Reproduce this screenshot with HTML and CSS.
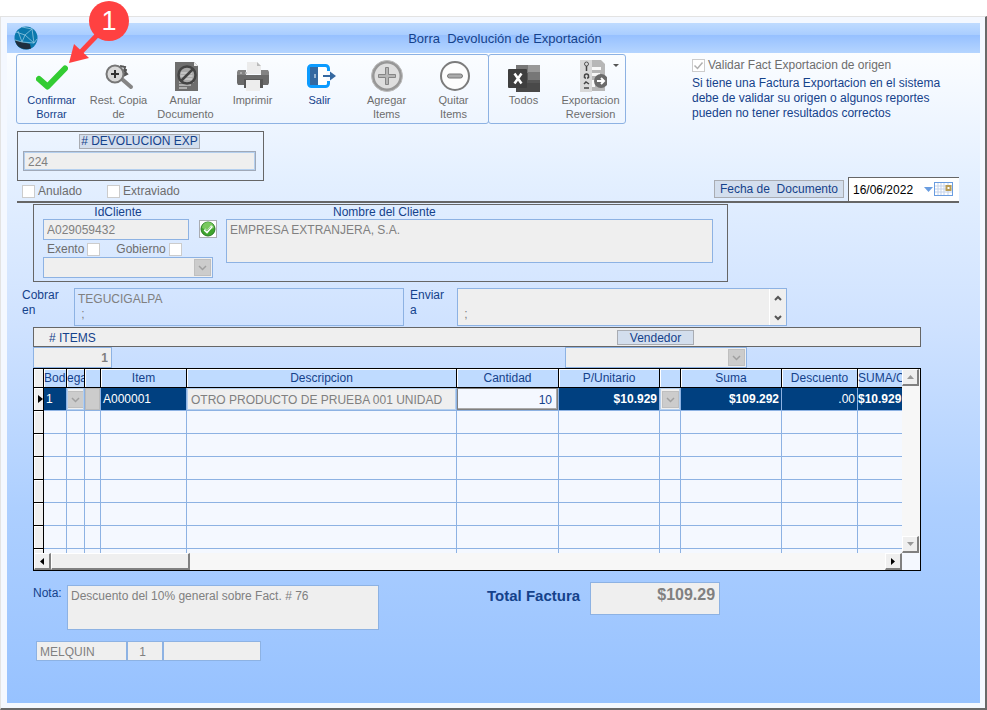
FILE: index.html
```html
<!DOCTYPE html>
<html lang="es">
<head>
  <meta charset="UTF-8">
  <meta name="viewport" content="width=device-width, initial-scale=1.0">
  <title>Borra Devolución de Exportación</title>
  <link rel="stylesheet" href="styles.css">
</head>
<body>
  <div class="window">
    <header class="titlebar">
      <svg class="logo" viewBox="0 0 24 24" width="24" height="24" aria-hidden="true">
        <circle cx="12" cy="12" r="11.5" fill="#0b78ad"/>
        <path d="M1 14l7 2 8 2 1 4.500C9 25 2 21 1 14z" fill="#1f2f3f"/>
        <path d="M2 6l9 3 7-6M11 9l-3 7-7-2M11 9l9 8M18 3l2 14 3-4M8 16l12 1M8 16L4 5M18 3L8 1" fill="none" stroke="#8fc6e0" stroke-width=".8"/>
      </svg>
      <h1>Borra&nbsp; Devolución de Exportación</h1>
    </header>

    <form class="form">
      <div class="top">
        <div class="ribbon">
          <div class="ribbon-group">
            <button type="button" class="tool active">
              <svg viewBox="0 0 32 32" width="32" height="32"><path d="M3 19l8.500 7.500L29 8.500" fill="none" stroke="#33cc33" stroke-width="6" stroke-linecap="round" stroke-linejoin="round"/></svg>
              Confirmar Borrar
            </button>
            <button type="button" class="tool">
              <svg viewBox="0 0 32 32" width="32" height="32"><path d="M17 6l5 1-1 4 3 3-4 2M20 6l3 4-2 6" fill="none" stroke="#555" stroke-width="2"/><path d="M20 20l8 7" stroke="#858585" stroke-width="4" stroke-linecap="round"/><circle cx="12" cy="14" r="8.500" fill="#d9d9d9" stroke="#777" stroke-width="2"/><path d="M12 10v8M8 14h8" stroke="#333" stroke-width="2"/></svg>
              Rest. Copia de
            </button>
            <button type="button" class="tool">
              <svg viewBox="0 0 32 32" width="32" height="32"><path d="M5 2h19l4 4v25H5z" fill="#6e6e6e"/><path d="M24 2l4 4h-4z" fill="#eee"/><path d="M9 16h15M9 19h15M9 22h15M9 25h12M9 28h8" stroke="#eee"/><circle cx="17" cy="15" r="8.500" fill="#a9a9a9" stroke="#444" stroke-width="2.500"/><path d="M10.500 16h12M11 13h11M12 19h10" stroke="#ddd"/><path d="M11 21L23 9" stroke="#444" stroke-width="2.500"/></svg>
              Anular Documento
            </button>
            <button type="button" class="tool">
              <svg viewBox="0 0 32 32" width="32" height="32"><path d="M10 2h10l4 4v8H10z" fill="#ececec"/><path d="M20 2v4h4z" fill="#bbb"/><path d="M1 10h8v5h15v-5h7l1 2v10H0V12z" fill="#838383"/><path d="M0 15h32v8l-1 2H1l-1-2z" fill="#6a6a6a"/><path d="M7 19h19v9H7z" fill="#585858"/><path d="M9 20h14v11H9z" fill="#ededed"/><circle cx="4" cy="13" r="1" fill="#bbb"/><circle cx="9" cy="13" r="1" fill="#bbb"/></svg>
              Imprimir
            </button>
            <button type="button" class="tool active">
              <svg viewBox="0 0 32 32" width="32" height="32"><rect x="4.500" y="5.500" width="20" height="21" rx="3" fill="#fff" stroke="#0c9bff" stroke-width="3"/><path d="M6 7h8v18H6z" fill="#3568a0"/><path d="M11 14v4" stroke="#fff"/><path d="M22 11h5v10h-5z" fill="#f9fbff"/><path d="M19 16h10" stroke="#3568a0" stroke-width="2"/><path d="M26 11.500l6 4.500-6 4.500z" fill="#3568a0"/></svg>
              Salir
            </button>
            <button type="button" class="tool">
              <svg viewBox="0 0 32 32" width="32" height="32"><circle cx="16" cy="16" r="14" fill="#dedede" stroke="#979797" stroke-width="3"/><circle cx="16" cy="16" r="15.500" fill="none" stroke="#bdbdbd"/><path d="M14.500 7.500h3v7h7v3h-7v7h-3v-7h-7v-3h7z" fill="#b5b5b5" stroke="#858585"/></svg>
              Agregar<br>Items
            </button>
            <button type="button" class="tool">
              <svg viewBox="0 0 32 32" width="32" height="32"><circle cx="17" cy="16" r="14" fill="#fdfdfd" stroke="#7c7c7c" stroke-width="2"/><rect x="9.500" y="14" width="15" height="4" rx="2" fill="#aaa" stroke="#777"/></svg>
              Quitar<br>Items
            </button>
          </div>
          <div class="ribbon-group">
            <button type="button" class="tool">
              <svg viewBox="0 0 32 32" width="32" height="32"><g transform="translate(0 2)"><path d="M8 3h12v8H8z" fill="#777"/><path d="M20 3h12v7H20z" fill="#999"/><path d="M20 10h12v8H20z" fill="#777"/><path d="M8 11h12v10H8z" fill="#555"/><path d="M20 18h12v5H20z" fill="#555"/><path d="M8 21h24v9H8z" fill="#494949"/><rect y="7" width="19" height="19" rx="1" fill="#3f3f3f"/><path d="M6.500 11.500l7 10M13.500 11.500l-7 10" stroke="#fff" stroke-width="2.500"/></g></svg>
              Todos
            </button>
            <button type="button" class="tool menu">
              <svg viewBox="0 0 32 32" width="32" height="32"><path d="M5 0h21l4 4v27H5z" fill="#b7b7b7"/><path d="M5 0h12v32H5z" fill="#d9d9d9"/><path d="M17 7h9v3h-9zM17 13h8v3h-8zM17 20h3v7h-3z" fill="#f8f8f8"/><circle cx="11.500" cy="4" r="2" fill="none" stroke="#555"/><path d="M11.500 6v5M9.500 18v-2a2 2 0 0 1 4 0v2M9.500 18h1.500M12 18h1.500M9 24l2-2 3 2M9 28h5" fill="none" stroke="#444" stroke-width="1.500"/><circle cx="26" cy="21" r="7" fill="#6b6b6b"/><path d="M22 21h7M26 18l3 3-3 3" fill="none" stroke="#fff" stroke-width="2"/></svg>
              Exportacion Reversion
            </button>
          </div>
        </div>
        <div class="validation">
          <label class="check"><input type="checkbox" checked disabled>Validar Fact Exportacion de origen</label>
          <p>Si tiene una Factura Exportacion en el sistema debe de validar su origen o algunos reportes pueden no tener resultados correctos</p>
        </div>
      </div>

      <div class="document">
        <div class="document-id">
          <div class="box">
            <label class="tag" for="devolucion"># DEVOLUCION EXP</label>
            <input type="text" id="devolucion" value="224" disabled>
          </div>
          <div class="flags">
            <label class="check"><input type="checkbox" disabled>Anulado</label>
            <label class="check"><input type="checkbox" disabled>Extraviado</label>
          </div>
        </div>
        <div class="date">
          <label class="tag" for="fecha">Fecha de&nbsp; Documento</label>
          <div class="date-field">
            <input type="text" id="fecha" value="16/06/2022">
            <button type="button" class="calendar" aria-label="Calendario">
              <svg viewBox="0 0 29 16" width="29" height="16"><path d="M0 6h9l-4.500 5z" fill="#6a9de0"/><rect x="10.500" y="1.500" width="18" height="13" fill="#fff" stroke="#6a9de0"/><path d="M11 5h17M11 8h17M11 11h17M14 2v12M17 2v12M20 2v12M24 2v12" stroke="#c5d3ea"/><rect x="22.500" y="5" width="4" height="4" fill="#fff" stroke="#b89b55" stroke-width="2"/></svg>
            </button>
          </div>
        </div>
      </div>

      <div class="client">
        <div class="client-id">
          <label for="idcliente">IdCliente</label>
          <input type="text" id="idcliente" value="A029059432" disabled>
          <div class="client-flags">
            <label class="check">Exento<input type="checkbox" disabled></label>
            <label class="check">Gobierno<input type="checkbox" disabled></label>
          </div>
          <select class="client-type" aria-label="Tipo de cliente" disabled><option></option></select>
        </div>
        <button type="button" class="verify" aria-label="Verificar cliente">
          <svg viewBox="0 0 16 16" width="16" height="16"><circle cx="8" cy="8" r="7" fill="#3fa52d" stroke="#277a24"/><path d="M2 7a6 6 0 0 1 12 0c-4 2-8 2-12 0z" fill="#79c95e"/><path d="M4.500 8.500L7 11l5-6" fill="none" stroke="#fff" stroke-width="2.500"/><path d="M5 8.500l2 1.500 4-4.500" fill="none" stroke="#3fa52d" stroke-width=".7"/></svg>
        </button>
        <div class="client-name">
          <label for="nombre">Nombre del Cliente</label>
          <textarea id="nombre" disabled>EMPRESA EXTRANJERA, S.A.</textarea>
        </div>
      </div>

      <div class="addresses">
        <label for="cobrar">Cobrar en</label>
        <textarea id="cobrar" class="clear" disabled>TEGUCIGALPA
 ;</textarea>
        <label class="send" for="enviar">Enviar a</label>
        <div class="scroll-text">
          <textarea id="enviar" disabled>

 ;</textarea>
          <div class="scroll-arrows">
            <svg viewBox="0 0 8 6" width="8" height="6"><path d="M1 5l3-3 3 3" fill="none" stroke="#555" stroke-width="2"/></svg>
            <svg viewBox="0 0 8 6" width="8" height="6"><path d="M1 1l3 3 3-3" fill="none" stroke="#555" stroke-width="2"/></svg>
          </div>
        </div>
      </div>

      <section class="items">
        <div class="items-bar">
          <label for="numitems"># ITEMS</label>
          <label class="tag" for="vendedor">Vendedor</label>
        </div>
        <div class="items-fields">
          <input type="text" id="numitems" value="1" disabled>
          <select id="vendedor" disabled><option></option></select>
        </div>

        <div class="grid">
          <div class="grid-view">
            <table>
              <colgroup>
                <col class="c-mark"><col class="c-bod"><col class="c-ega"><col class="c-pick"><col class="c-item"><col><col class="c-qty"><col class="c-price"><col class="c-unit"><col class="c-sum"><col class="c-disc"><col class="c-last">
              </colgroup>
              <thead>
                <tr>
                  <th class="mark"></th>
                  <th class="left">Bod</th>
                  <th class="left">ega</th>
                  <th></th>
                  <th>Item</th>
                  <th>Descripcion</th>
                  <th>Cantidad</th>
                  <th>P/Unitario</th>
                  <th></th>
                  <th>Suma</th>
                  <th>Descuento</th>
                  <th class="left">SUMA/C</th>
                </tr>
              </thead>
              <tbody>
                <tr class="selected">
                  <td class="mark"><svg viewBox="0 0 5 8" width="5" height="8"><path d="M0 0l5 4-5 4z"/></svg></td>
                  <td>1</td>
                  <td class="control"><select aria-label="Bodega" disabled><option></option></select></td>
                  <td class="control"><button type="button" class="pick" aria-label="Buscar item" disabled></button></td>
                  <td>A000001</td>
                  <td class="control"><input type="text" aria-label="Descripcion" value="OTRO PRODUCTO DE PRUEBA 001 UNIDAD" disabled></td>
                  <td class="control"><input type="text" class="qty" aria-label="Cantidad" value="10"></td>
                  <td class="money">$10.929</td>
                  <td class="control"><select aria-label="Precio" disabled><option></option></select></td>
                  <td class="money">$109.292</td>
                  <td class="number">.00</td>
                  <td class="money">$10.929</td>
                </tr>
                <tr><td class="mark"></td><td></td><td></td><td></td><td></td><td></td><td></td><td></td><td></td><td></td><td></td><td></td></tr>
                <tr><td class="mark"></td><td></td><td></td><td></td><td></td><td></td><td></td><td></td><td></td><td></td><td></td><td></td></tr>
                <tr><td class="mark"></td><td></td><td></td><td></td><td></td><td></td><td></td><td></td><td></td><td></td><td></td><td></td></tr>
                <tr><td class="mark"></td><td></td><td></td><td></td><td></td><td></td><td></td><td></td><td></td><td></td><td></td><td></td></tr>
                <tr><td class="mark"></td><td></td><td></td><td></td><td></td><td></td><td></td><td></td><td></td><td></td><td></td><td></td></tr>
                <tr><td class="mark"></td><td></td><td></td><td></td><td></td><td></td><td></td><td></td><td></td><td></td><td></td><td></td></tr>
                <tr class="partial"><td class="mark"></td><td></td><td></td><td></td><td></td><td></td><td></td><td></td><td></td><td></td><td></td><td></td></tr>
              </tbody>
            </table>
          </div>
          <div class="vscroll">
            <button type="button" class="arrow" aria-label="Arriba" disabled><svg viewBox="0 0 7 4" width="7" height="4"><path d="M0 4l3.500-4L7 4z" fill="#999"/></svg></button>
            <button type="button" class="arrow" aria-label="Abajo" disabled><svg viewBox="0 0 7 4" width="7" height="4"><path d="M0 0l3.500 4L7 0z" fill="#999"/></svg></button>
          </div>
          <div class="hscroll">
            <button type="button" class="arrow" aria-label="Izquierda"><svg viewBox="0 0 4 7" width="4" height="7"><path d="M4 0L0 3.500 4 7z"/></svg></button>
            <div class="thumb"></div>
            <button type="button" class="arrow" aria-label="Derecha"><svg viewBox="0 0 4 7" width="4" height="7"><path d="M0 0l4 3.500L0 7z"/></svg></button>
          </div>
        </div>
      </section>

      <div class="summary">
        <label for="nota">Nota:</label>
        <textarea id="nota" disabled>Descuento del 10% general sobre Fact. # 76</textarea>
        <label class="total-label" for="total">Total Factura</label>
        <input type="text" id="total" value="$109.29" disabled>
      </div>

      <div class="user">
        <input type="text" aria-label="Usuario" value="MELQUIN" disabled>
        <input type="text" class="user-level" aria-label="Nivel" value="1" disabled>
        <input type="text" class="user-extra" aria-label="Detalle" disabled>
      </div>
    </form>
  </div>

  <div class="callout">
    <svg viewBox="0 0 64 64" width="64" height="64" aria-hidden="true"><path d="M34 30L12 53" stroke="#ff4141" stroke-width="5"/><path d="M1 63l5-19 15 14z" fill="#ff4141"/></svg>
    <span>1</span>
  </div>
</body>
</html>
```

FILE: styles.css
```css
* {
  box-sizing: border-box;
}
body {
  margin: 0;
  padding-top: 16px;
  background: #fff;
  color: #15428b;
  font-family: "Liberation Sans", Arial, sans-serif;
  font-size: 12px;
  line-height: 15px;
}
svg {
  display: block;
}
.window {
  padding: 6px 5px 5px 6px;
  background: #f4f8ff;
  border: 1px solid #e3e3e3;
  border-right: 2px solid #696969;
  border-bottom: 2px solid #696969;
}
.titlebar {
  display: flex;
  align-items: center;
  height: 30px;
  padding: 0 8px 0 7px;
  background: linear-gradient(#bfdbff, #a9cdff 12px, #96c0ff 12px, #b5d5ff);
}
.titlebar h1 {
  flex: 1;
  margin: 0;
  text-align: center;
  font-size: 13px;
  font-weight: normal;
}
.form {
  min-height: 650px;
  padding: 1px 21px 40px 9px;
  background: linear-gradient(#fbfdff, #e3efff 20%, #cfe2ff 42%, #adcfff 70%, #97c2ff);
}

input, textarea, select, button {
  margin: 0;
  font: inherit;
  color: #808080;
}
input, textarea, select {
  display: block;
  min-width: 0;
  padding: 2px 3px 1px;
  background: #efefef;
  border: 1px solid #8db2e3;
  border-radius: 0;
  outline: none;
  opacity: 1;
}
textarea {
  padding-top: 3px;
  resize: none;
  overflow: hidden;
}
select {
  appearance: none;
  background: #efefef url("data:image/svg+xml,%3Csvg xmlns='http://www.w3.org/2000/svg' width='17' height='17'%3E%3Crect x='.5' y='.5' width='16' height='16' fill='%23cccccc' stroke='%23bfbfbf'/%3E%3Cpath d='M5 7l3.500 3.500L12 7' fill='none' stroke='%23a0a0a0' stroke-width='1.500'/%3E%3C/svg%3E") no-repeat right 1px center;
}
input[type="checkbox"] {
  appearance: none;
  width: 13px;
  height: 13px;
  padding: 0;
  background: #fff;
  border: 1px solid #ccc;
}
input[type="checkbox"]:checked {
  background: #fff url("data:image/svg+xml,%3Csvg xmlns='http://www.w3.org/2000/svg' width='11' height='11'%3E%3Cpath d='M1.500 5.500l3 3 5-6' fill='none' stroke='%23b0b0b0' stroke-width='1.500'/%3E%3C/svg%3E") no-repeat;
}
.check {
  display: flex;
  align-items: center;
  gap: 3px;
  color: #6d6d6d;
}
.tag {
  padding: 0 5px;
  background: #d3deed;
  border: 1px solid #a9acb2;
}

/* ribbon */
.top {
  display: flex;
  align-items: flex-start;
  gap: 66px;
}
.ribbon {
  display: flex;
  flex: none;
}
.ribbon-group {
  display: flex;
  height: 70px;
  padding: 0 1px;
  border: 1px solid #8db2e3;
  border-radius: 3px;
}
.ribbon-group + .ribbon-group {
  margin-left: -1px;
}
.tool {
  position: relative;
  width: 67px;
  padding: 5px 0 0;
  background: none;
  border: 0;
  color: #6d6d6d;
  font-size: 11px;
  line-height: 14px;
  display: flex;
  flex-direction: column;
  align-items: center;
}
.tool.active {
  color: #15428b;
}
.tool svg {
  margin-bottom: 1px;
}
.tool.menu::after {
  content: "";
  position: absolute;
  top: 9px;
  right: 5px;
  border: 3px solid transparent;
  border-top-color: #555;
  border-bottom: 0;
}
.validation {
  flex: 1;
  max-width: 268px;
  padding-top: 4px;
}
.validation p {
  margin: 3px 0 0;
}

/* document */
.document {
  display: flex;
  justify-content: space-between;
  align-items: flex-end;
  height: 79px;
  margin-left: 1px;
  border-bottom: 2px solid #666;
}
.document-id {
  width: 247px;
}
.box {
  display: flex;
  flex-direction: column;
  align-items: center;
  height: 50px;
  padding: 2px 7px 0 5px;
  border: 1px solid #666;
}
.box .tag {
  margin-bottom: 2px;
  padding: 0 1px;
  line-height: 13px;
}
.box input {
  width: 100%;
  height: 20px;
  padding-left: 4px;
  border-color: #a0a9b8;
  box-shadow: inset 0 0 0 1px #b4cfee;
}
.flags {
  display: flex;
  gap: 25px;
  padding: 3px 5px 2px;
}
.date {
  display: flex;
  align-items: center;
  gap: 4px;
}
.date .tag {
  line-height: 16px;
}
.date-field {
  display: flex;
  align-items: center;
  width: 111px;
  height: 24px;
  background: #fff;
  border-top: 1px solid #666;
  border-left: 1px solid #666;
}
.date-field input {
  flex: 1;
  padding-left: 4px;
  background: none;
  border: 0;
  color: #000;
}
.calendar {
  padding: 0 6px 2px 0;
  background: none;
  border: 0;
}

/* client */
.client {
  display: flex;
  width: 695px;
  max-width: 100%;
  height: 78px;
  margin: 1px 0 0 17px;
  padding: 0 14px 0 9px;
  border: 1px solid #666;
}
.client-id {
  width: 170px;
}
.client-id > label {
  display: block;
  height: 14px;
  margin-right: 20px;
  text-align: center;
}
.client-id > input {
  width: 146px;
  height: 21px;
}
.client-flags {
  display: flex;
  gap: 16px;
  height: 17px;
  padding: 2px 4px 0;
}
.client-type {
  width: 100%;
  height: 21px;
}
.verify {
  width: 18px;
  height: 18px;
  margin: 15px 9px 0 -14px;
  padding: 0;
  background: #fff;
  border: 1px solid #a9acb2;
}
.client-name {
  flex: 1;
}
.client-name label {
  display: block;
  height: 14px;
  padding-left: 107px;
}
.client-name textarea {
  width: 100%;
  height: 44px;
}

/* addresses */
.addresses {
  display: grid;
  grid-template-columns: 52px 1fr 53px 1fr;
  width: 765px;
  max-width: 100%;
  margin: 6px 0 1px 6px;
}
.addresses > label {
  padding-right: 10px;
}
.addresses .send {
  padding-left: 6px;
}
.addresses > textarea,
.scroll-text {
  height: 38px;
}
.scroll-text {
  display: flex;
  background: #efefef;
  border: 1px solid #8db2e3;
}
.addresses .clear {
  background: none;
}
.scroll-text textarea {
  flex: 1;
  border: 0;
  border-right: 1px solid #fff;
}
.scroll-arrows {
  display: flex;
  flex-direction: column;
  justify-content: space-between;
  align-items: center;
  width: 16px;
  padding: 6px 0 4px;
}

/* items */
.items {
  margin: 0 38px 0 17px;
}
.items-bar {
  display: flex;
  height: 20px;
  padding: 2px 226px 1px 15px;
  justify-content: space-between;
  background: #efefef;
  border: 1px solid #666;
}
.items-bar label {
  line-height: 16px;
}
.items-bar .tag {
  width: 77px;
  text-align: center;
  line-height: 14px;
}
.items-fields {
  display: flex;
  justify-content: space-between;
  padding-right: 174px;
}
.items-fields input,
.items-fields select {
  height: 21px;
}
.items-fields input {
  width: 79px;
  text-align: right;
  font-weight: bold;
}
.items-fields select {
  width: 182px;
}
.grid {
  display: grid;
  grid-template-columns: 1fr 18px;
  border: 1px solid #000;
  background: #f4f8ff;
}
.grid-view {
  overflow: hidden;
}
table {
  width: 100%;
  table-layout: fixed;
  border-collapse: separate;
  border-spacing: 0;
}
.c-mark { width: 10px; }
.c-bod { width: 23px; }
.c-ega { width: 18px; }
.c-pick { width: 16px; }
.c-item { width: 86px; }
.c-qty { width: 102px; }
.c-price { width: 101px; }
.c-unit { width: 21px; }
.c-sum { width: 101px; }
.c-disc { width: 76px; }
.c-last { width: 44px; }
th, td {
  overflow: hidden;
  white-space: nowrap;
  padding: 0 2px;
  border-right: 1px solid #8db2e3;
  border-bottom: 1px solid #8db2e3;
}
th {
  height: 19px;
  padding: 0 1px;
  background: #bfdbff;
  border-color: #000;
  box-shadow: inset 1px 1px #fff;
  font-weight: normal;
  line-height: 18px;
}
th.left {
  padding: 0;
  text-align: left;
}
td {
  height: 23px;
}
.mark {
  padding: 0;
  background: #efefef;
  border-color: #000;
  box-shadow: inset 1px 1px #fff;
}
.mark svg {
  margin-left: auto;
}
th:last-child, td:last-child {
  padding-left: 0;
  padding-right: 1px;
  border-right: 0;
}
.partial td {
  height: 4px;
  border-bottom: 0;
}
.selected td {
  color: #fff;
}
.selected td:not(.mark) {
  background: #004080;
}
.selected .control {
  padding: 0;
}
.selected .control > * {
  width: 100%;
  height: 22px;
}
.control input {
  border-color: #b4cfee;
}
.control select {
  background-position: center;
  border-color: #b4cfee;
}
.control .qty {
  padding-right: 5px;
  background: #f4f8ff;
  color: #15428b;
  text-align: right;
  border: 1px solid #808080;
  box-shadow: inset -1px -1px #aaa;
}
.pick {
  display: block;
  background: #ccc;
  border: 1px solid #bbb;
}
.money, .number {
  text-align: right;
}
.money {
  font-weight: bold;
}
.vscroll, .hscroll {
  display: flex;
  background: #f7f7f7;
}
.vscroll {
  flex-direction: column;
  justify-content: space-between;
}
.arrow, .thumb {
  display: flex;
  align-items: center;
  justify-content: center;
  height: 17px;
  padding: 0;
  background: #efefef;
  border: 1px solid #fff;
  border-right: 2px solid #808080;
  border-bottom: 2px solid #808080;
}
.arrow {
  width: 17px;
}
.thumb {
  width: 139px;
  margin-right: auto;
}

/* summary */
.summary {
  display: flex;
  align-items: flex-start;
  margin: 11px 0 0 17px;
}
.summary label {
  width: 34px;
  padding-top: 4px;
}
.summary textarea {
  width: 312px;
  height: 45px;
  margin-top: 3px;
}
.summary .total-label {
  width: auto;
  margin: 0 10px 0 108px;
  padding-top: 6px;
  font-size: 15px;
  font-weight: bold;
}
.summary input {
  width: 130px;
  height: 33px;
  padding: 0 4px 8px;
  text-align: right;
  font-size: 16px;
  font-weight: bold;
}
.user {
  display: flex;
  margin: 11px 0 0 20px;
}
.user input {
  width: 91px;
  height: 20px;
}
.user .user-level {
  width: 36px;
  padding-right: 8px;
  text-align: center;
}
.user .user-extra {
  width: 98px;
}

/* step marker over the toolbar */
.callout {
  position: absolute;
  top: 0;
  left: 68px;
}
.callout span {
  position: absolute;
  top: 1px;
  left: 21px;
  width: 40px;
  height: 40px;
  border-radius: 50%;
  background: #ff4141;
  color: #fff;
  font-size: 27px;
  line-height: 40px;
  text-align: center;
}
```
